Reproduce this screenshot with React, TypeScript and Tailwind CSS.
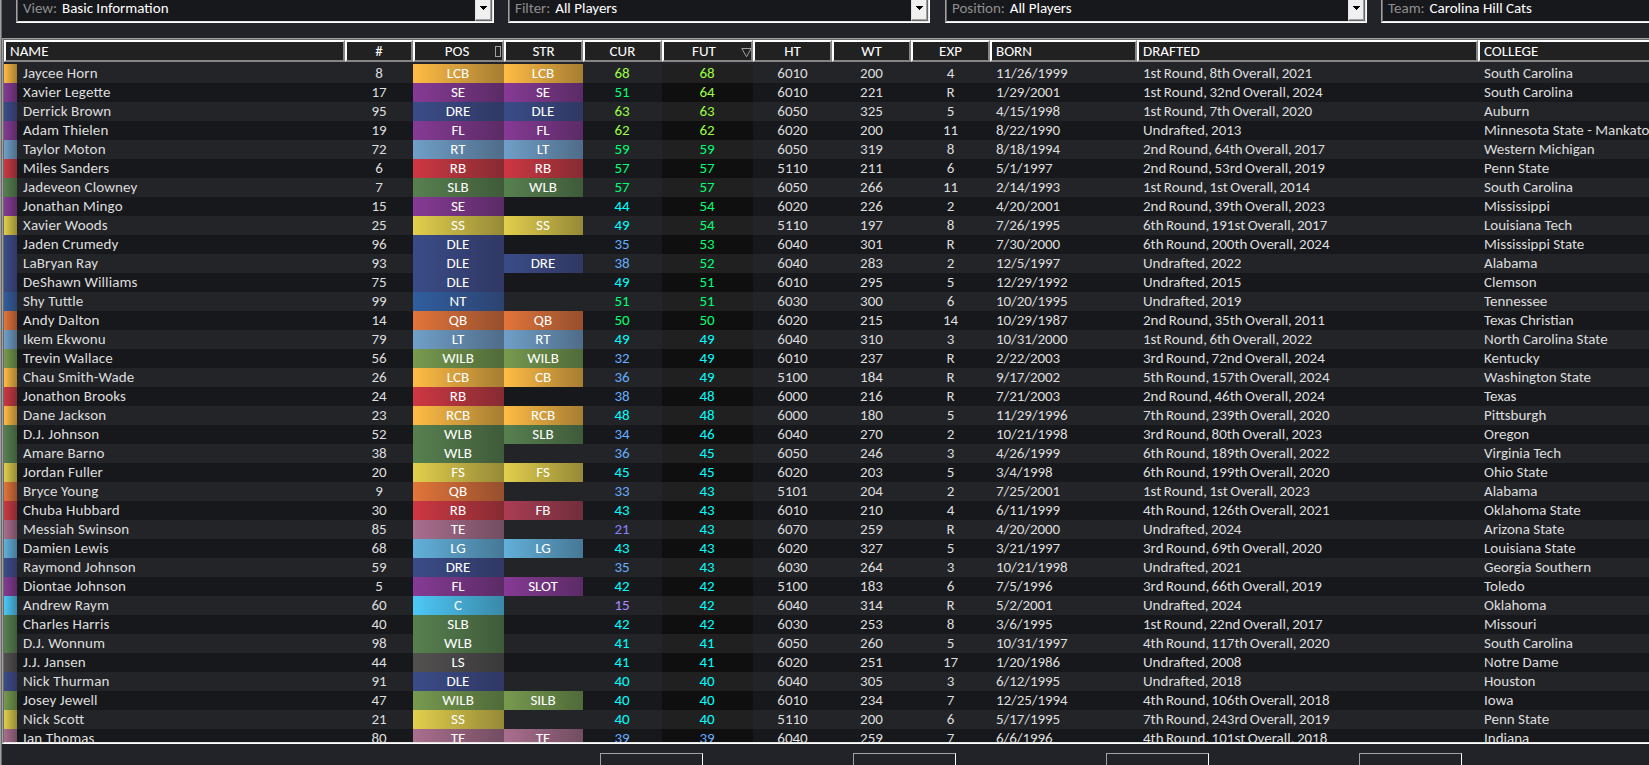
import type { ReactNode } from "react";

const PLAYERS = `Jaycee Horn|8|LCB|LCB|68|68|6010|200|4|11/26/1999|1st Round, 8th Overall, 2021|South Carolina
Xavier Legette|17|SE|SE|51|64|6010|221|R|1/29/2001|1st Round, 32nd Overall, 2024|South Carolina
Derrick Brown|95|DRE|DLE|63|63|6050|325|5|4/15/1998|1st Round, 7th Overall, 2020|Auburn
Adam Thielen|19|FL|FL|62|62|6020|200|11|8/22/1990|Undrafted, 2013|Minnesota State - Mankato
Taylor Moton|72|RT|LT|59|59|6050|319|8|8/18/1994|2nd Round, 64th Overall, 2017|Western Michigan
Miles Sanders|6|RB|RB|57|57|5110|211|6|5/1/1997|2nd Round, 53rd Overall, 2019|Penn State
Jadeveon Clowney|7|SLB|WLB|57|57|6050|266|11|2/14/1993|1st Round, 1st Overall, 2014|South Carolina
Jonathan Mingo|15|SE||44|54|6020|226|2|4/20/2001|2nd Round, 39th Overall, 2023|Mississippi
Xavier Woods|25|SS|SS|49|54|5110|197|8|7/26/1995|6th Round, 191st Overall, 2017|Louisiana Tech
Jaden Crumedy|96|DLE||35|53|6040|301|R|7/30/2000|6th Round, 200th Overall, 2024|Mississippi State
LaBryan Ray|93|DLE|DRE|38|52|6040|283|2|12/5/1997|Undrafted, 2022|Alabama
DeShawn Williams|75|DLE||49|51|6010|295|5|12/29/1992|Undrafted, 2015|Clemson
Shy Tuttle|99|NT||51|51|6030|300|6|10/20/1995|Undrafted, 2019|Tennessee
Andy Dalton|14|QB|QB|50|50|6020|215|14|10/29/1987|2nd Round, 35th Overall, 2011|Texas Christian
Ikem Ekwonu|79|LT|RT|49|49|6040|310|3|10/31/2000|1st Round, 6th Overall, 2022|North Carolina State
Trevin Wallace|56|WILB|WILB|32|49|6010|237|R|2/22/2003|3rd Round, 72nd Overall, 2024|Kentucky
Chau Smith-Wade|26|LCB|CB|36|49|5100|184|R|9/17/2002|5th Round, 157th Overall, 2024|Washington State
Jonathon Brooks|24|RB||38|48|6000|216|R|7/21/2003|2nd Round, 46th Overall, 2024|Texas
Dane Jackson|23|RCB|RCB|48|48|6000|180|5|11/29/1996|7th Round, 239th Overall, 2020|Pittsburgh
D.J. Johnson|52|WLB|SLB|34|46|6040|270|2|10/21/1998|3rd Round, 80th Overall, 2023|Oregon
Amare Barno|38|WLB||36|45|6050|246|3|4/26/1999|6th Round, 189th Overall, 2022|Virginia Tech
Jordan Fuller|20|FS|FS|45|45|6020|203|5|3/4/1998|6th Round, 199th Overall, 2020|Ohio State
Bryce Young|9|QB||33|43|5101|204|2|7/25/2001|1st Round, 1st Overall, 2023|Alabama
Chuba Hubbard|30|RB|FB|43|43|6010|210|4|6/11/1999|4th Round, 126th Overall, 2021|Oklahoma State
Messiah Swinson|85|TE||21|43|6070|259|R|4/20/2000|Undrafted, 2024|Arizona State
Damien Lewis|68|LG|LG|43|43|6020|327|5|3/21/1997|3rd Round, 69th Overall, 2020|Louisiana State
Raymond Johnson|59|DRE||35|43|6030|264|3|10/21/1998|Undrafted, 2021|Georgia Southern
Diontae Johnson|5|FL|SLOT|42|42|5100|183|6|7/5/1996|3rd Round, 66th Overall, 2019|Toledo
Andrew Raym|60|C||15|42|6040|314|R|5/2/2001|Undrafted, 2024|Oklahoma
Charles Harris|40|SLB||42|42|6030|253|8|3/6/1995|1st Round, 22nd Overall, 2017|Missouri
D.J. Wonnum|98|WLB||41|41|6050|260|5|10/31/1997|4th Round, 117th Overall, 2020|South Carolina
J.J. Jansen|44|LS||41|41|6020|251|17|1/20/1986|Undrafted, 2008|Notre Dame
Nick Thurman|91|DLE||40|40|6040|305|3|6/12/1995|Undrafted, 2018|Houston
Josey Jewell|47|WILB|SILB|40|40|6010|234|7|12/25/1994|4th Round, 106th Overall, 2018|Iowa
Nick Scott|21|SS||40|40|5110|200|6|5/17/1995|7th Round, 243rd Overall, 2019|Penn State
Ian Thomas|80|TE|TE|39|39|6040|259|7|6/6/1996|4th Round, 101st Overall, 2018|Indiana`
  .split("\n")
  .map((line) => line.split("|"));

const CORNER = "bg-linear-to-r from-[#ffbc44] to-[#a67d32]";
const RECEIVER = "bg-linear-to-r from-[#863a95] to-[#5b2b65]";
const END = "bg-linear-to-r from-[#3a4c88] to-[#303863]";
const TACKLE = "bg-linear-to-r from-[#709fc8] to-[#4f6c88]";
const OUTSIDE = "bg-linear-to-r from-[#57804f] to-[#3f5b3a]";
const INSIDE = "bg-linear-to-r from-[#779a4f] to-[#506a39]";
const SAFETY = "bg-linear-to-r from-[#e2cf4c] to-[#958937]";

const POSITION_FILL: Record<string, string> = {
  LCB: CORNER, RCB: CORNER, CB: CORNER,
  SE: RECEIVER, FL: RECEIVER, SLOT: RECEIVER,
  DRE: END, DLE: END,
  RT: TACKLE, LT: TACKLE,
  SLB: OUTSIDE, WLB: OUTSIDE,
  WILB: INSIDE, SILB: INSIDE,
  SS: SAFETY, FS: SAFETY,
  RB: "bg-linear-to-r from-[#ce3743] to-[#862b32]",
  FB: "bg-linear-to-r from-[#ab3d54] to-[#702e3c]",
  NT: "bg-linear-to-r from-[#305e9f] to-[#2c4370]",
  QB: "bg-linear-to-r from-[#e2753a] to-[#964f2d]",
  TE: "bg-linear-to-r from-[#aa6e8e] to-[#724d61]",
  LG: "bg-linear-to-r from-[#62b0da] to-[#467896]",
  C: "bg-linear-to-r from-[#4dc8f7] to-[#3a88a8]",
  LS: "bg-linear-to-r from-[#535050] to-[#3a393a]",
};

function ratingColor(value: number) {
  if (value >= 60) return "text-[#9dff45]";
  if (value >= 50) return "text-[#00ff72]";
  if (value >= 40) return "text-[#00ffff]";
  if (value >= 30) return "text-[#66aeff]";
  if (value >= 20) return "text-[#8484ff]";
  return "text-[#b088ff]";
}

const GRID =
  "grid w-[1745px] grid-cols-[341px_68px_91px_79px_79px_91px_79px_79px_79px_147px_341px_271px]";

type HeaderCellProps = { label: string; align?: string; children?: ReactNode };

function HeaderCell({ label, align = "justify-center", children }: HeaderCellProps) {
  return (
    <div className="relative border-2 border-t-white border-l-white border-r-[#858585] border-b-[#858585] bg-[#212121]">
      <div className={`flex h-full items-center leading-[18px] ${align}`}>{label}</div>
      {children}
    </div>
  );
}

function ComboBox({ label, value, width }: { label: string; value: string; width: string }) {
  return (
    <div
      className={`${width} flex h-[23px] shrink-0 border-r border-b border-l border-r-white border-b-white border-l-[#a0a0a0]`}
    >
      <div className="flex flex-1 border-r border-b border-l border-r-[#e3e3e3] border-b-[#e3e3e3] border-l-[#696969] bg-[#17181b]">
        <div className="flex-1 pl-[5px] leading-[16px] whitespace-pre text-white">
          <span className="mr-[1.5px] text-[#8e8e8e]">{label}: </span>
          {value}
        </div>
        <div className="h-[21px] w-[17px] border-r border-b border-l border-r-[#696969] border-b-[#696969] border-l-[#e3e3e3]">
          <div className="h-full border-r border-b border-r-[#a0a0a0] border-b-[#a0a0a0] bg-[#f0f0f0] pt-[6px] pl-[4px]">
            <svg width="7" height="4" viewBox="0 0 7 4" shapeRendering="crispEdges">
              <path d="M0 0H7V1H6V2H5V3H4V4H3V3H2V2H1V1H0Z" fill="#000" />
            </svg>
          </div>
        </div>
      </div>
    </div>
  );
}

function PlayerRow({ player, odd }: { player: string[]; odd: boolean }) {
  const [name, number, pos, str, cur, fut, ht, wt, exp, born, drafted, college] = player;
  return (
    <div className={`${GRID} h-[19px] text-center leading-[19px] ${odd ? "bg-[#17181b]" : "bg-[#222428]"}`}>
      <div className="flex text-left tracking-[0.12px] [font-feature-settings:'liga']">
        <div className={`mr-[6px] h-[19px] w-[13px] ${POSITION_FILL[pos]}`} />
        {name}
      </div>
      <div>{number}</div>
      <div className={`pr-px text-white ${POSITION_FILL[pos]}`}>{pos}</div>
      <div className={`pr-px text-white ${str ? POSITION_FILL[str] : ""}`}>{str}</div>
      <div className={`pr-px ${ratingColor(Number(cur))}`}>{cur}</div>
      <div className={`pr-px ${odd ? "bg-[#0f0f0f]" : "bg-[#202020]"} ${ratingColor(Number(fut))}`}>{fut}</div>
      <div>{ht}</div>
      <div>{wt}</div>
      <div>{exp}</div>
      <div className="pl-[6px] text-left tracking-[-0.1px]">{born}</div>
      <div className="pl-[6px] text-left [word-spacing:-0.9px]">{drafted}</div>
      <div className="pl-[6px] text-left">{college}</div>
    </div>
  );
}

export default function App() {
  return (
    <div className="flex h-[765px] w-[1649px] overflow-hidden bg-[#222328] font-['Calibri','Carlito','Lato',sans-serif] text-[15px] whitespace-nowrap text-[#dedede]">
      <div className="w-[2px] shrink-0 border-r border-l border-r-[#696969] border-l-[#a0a0a0]" />
      <div className="flex w-[1647px] flex-col overflow-hidden">
        <div className="flex h-[38px] shrink-0 pl-[14px]">
          <ComboBox label="View" value="Basic Information" width="mr-[14px] w-[478px]" />
          <ComboBox label="Filter" value="All Players" width="mr-[15px] w-[422px]" />
          <ComboBox label="Position" value="All Players" width="mr-[14px] w-[422px]" />
          <ComboBox label="Team" value="Carolina Hill Cats" width="w-[422px]" />
        </div>

        <div className="h-[706px] w-[1800px] shrink-0 border-t border-b border-l border-t-[#a0a0a0] border-b-white border-l-[#a0a0a0]">
          <div className="flex h-[704px] flex-col overflow-hidden border-t border-b border-l border-t-[#696969] border-b-[#e3e3e3] border-l-[#696969]">
            <div className={`${GRID} mb-[2px] h-[22px] shrink-0 text-white`}>
              <HeaderCell label="NAME" align="pl-1" />
              <HeaderCell label="#" />
              <HeaderCell label="POS" align="justify-center pr-[3px]">
                <div className="absolute top-[4px] right-[1px] h-[11px] w-[6px] border border-[#a0a0a0]" />
              </HeaderCell>
              <HeaderCell label="STR" />
              <HeaderCell label="CUR" />
              <HeaderCell label="FUT" align="justify-center pr-[7px]">
                <svg className="absolute top-[6px] right-[-1px]" width="11" height="10" viewBox="0 0 11 10">
                  <path d="M0.8 0.5H10.2L5.5 8.8Z" fill="none" stroke="#a0a0a0" />
                </svg>
              </HeaderCell>
              <HeaderCell label="HT" />
              <HeaderCell label="WT" />
              <HeaderCell label="EXP" />
              <HeaderCell label="BORN" align="pl-1" />
              <HeaderCell label="DRAFTED" align="pl-1" />
              <HeaderCell label="COLLEGE" align="pl-1" />
            </div>
            <div className="min-h-0 flex-1 overflow-hidden">
              {PLAYERS.map((player, i) => (
                <PlayerRow key={player[0]} player={player} odd={i % 2 === 1} />
              ))}
            </div>
          </div>
        </div>

        <div className="flex h-[21px] shrink-0 gap-[150px] overflow-hidden pt-[9px] pl-[598px]">
          {[0, 1, 2, 3].map((i) => (
            <div
              key={i}
              className="h-[24px] w-[103px] shrink-0 border border-t-[#a0a0a0] border-r-white border-b-white border-l-[#a0a0a0]"
            />
          ))}
        </div>
      </div>
    </div>
  );
}
